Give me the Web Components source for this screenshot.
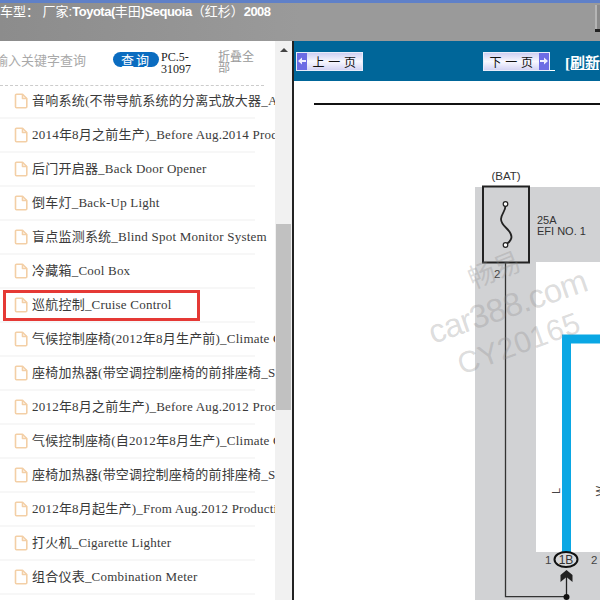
<!DOCTYPE html>
<html lang="zh"><head><meta charset="utf-8"><style>
html,body{margin:0;height:100%;overflow:hidden;background:#fff}
</style></head><body>
<app-shell>
<doc-side slot="side">
<doc-row>音响系统(不带导航系统的分离式放大器_Audio</doc-row>
<doc-row>2014年8月之前生产)_Before Aug.2014 Production</doc-row>
<doc-row>后门开启器_Back Door Opener</doc-row>
<doc-row>倒车灯_Back-Up Light</doc-row>
<doc-row>盲点监测系统_Blind Spot Monitor System</doc-row>
<doc-row>冷藏箱_Cool Box</doc-row>
<doc-row marked>巡航控制_Cruise Control</doc-row>
<doc-row>气候控制座椅(2012年8月生产前)_Climate Control</doc-row>
<doc-row>座椅加热器(带空调控制座椅的前排座椅_Seat</doc-row>
<doc-row>2012年8月之前生产)_Before Aug.2012 Production</doc-row>
<doc-row>气候控制座椅(自2012年8月生产)_Climate Control</doc-row>
<doc-row>座椅加热器(带空调控制座椅的前排座椅_Seat</doc-row>
<doc-row>2012年8月起生产)_From Aug.2012 Production</doc-row>
<doc-row>打火机_Cigarette Lighter</doc-row>
<doc-row>组合仪表_Combination Meter</doc-row>
</doc-side>
<doc-view slot="main"></doc-view>
</app-shell>
<script>
function shadow(el,html){el.attachShadow({mode:'open'}).innerHTML=html;}
const CJK='"Noto Sans CJK SC"';
customElements.define('app-shell',class extends HTMLElement{constructor(){super();shadow(this,`<style>
:host{display:flex;flex-direction:column;width:600px;height:600px;overflow:hidden}
header{height:38px;flex:none;border-top:3px solid #5f80c8;background:linear-gradient(90deg,#8c8c8c,#9a9a9a 50%);color:#fff;font:13px/17px "Liberation Sans",${CJK},sans-serif;white-space:nowrap;display:flex;justify-content:space-between}
b{font-weight:bold;letter-spacing:-.5px}
.tick{width:5px;height:27px;margin-top:2px;display:block;background:linear-gradient(90deg,#b5b5b5 0 2px,#8a8a8a 2px);border-bottom:3px solid #222;box-sizing:border-box}
.body{flex:1;min-height:0;display:flex}
.side{width:292px;flex:none;overflow:hidden}
.rule{width:2px;flex:none;background:#222}
.main{flex:1;min-width:0}
</style>
<header><span>车型： 厂家:<b>Toyota(</b>丰田<b>)Sequoia</b>（红杉）<b>2008</b></span><i class="tick"></i></header>
<div class="body"><div class="side"><slot name="side"></slot></div><div class="rule"></div><div class="main"><slot name="main"></slot></div></div>`);}});

customElements.define('doc-side',class extends HTMLElement{constructor(){super();shadow(this,`<style>
:host{display:flex;height:100%;background:#fff}
.col{width:275px;flex:none;overflow:hidden}
.search{height:45px;margin-bottom:-1px;width:264px;box-sizing:border-box;border-bottom:1px dashed #ccc;display:grid;grid-template-columns:113px 46px 59px 36px;align-items:start;font-family:"Liberation Serif",${CJK},serif}
.ph{font-size:13px;line-height:40px;color:#a9a9a9;white-space:nowrap;margin-left:-5px}
.btn{margin:11px 0 0;height:15px;border-radius:8px;background:#0a6cc0;color:#fff;font:13px/15px ${CJK},sans-serif;text-align:center;letter-spacing:2px}
.pc{margin:10px 0 0 2px;font-size:12px;line-height:12px;color:#222}
.fold{margin:11px 0 0;font-size:12px;line-height:11px;color:#999}
.bar{width:17px;flex:none;background:#f1f1f1;display:flex;flex-direction:column;align-items:center}
.up{height:18px;display:flex;justify-content:center;align-items:center}
.up i{border:4px solid transparent;border-bottom:4px solid #444;border-top:0;display:block}
.gap{height:165px}
.thumb{height:186px;width:15px;background:#c1c1c1}
</style>
<div class="col"><div class="search"><div class="ph">输入关键字查询</div><div class="btn">查询</div><div class="pc">PC.5-31097</div><div class="fold">折叠全部</div></div><slot></slot></div>
<div class="bar"><div class="up"><i></i></div><div class="gap"></div><div class="thumb"></div></div>`);}});

customElements.define('doc-row',class extends HTMLElement{constructor(){super();shadow(this,`<style>
:host{display:block;height:34px;width:255px;box-sizing:border-box;position:relative;border-bottom:2px solid #f7f7f7;padding-left:14px;font:13px/30px "Liberation Serif",${CJK},serif;color:#3a3a3a;white-space:nowrap;letter-spacing:.22px}
.in{display:flex;align-items:center;gap:4px;height:31px;width:261px;overflow:hidden}
svg{flex:none;display:block}
.mark{position:absolute;left:3px;top:1px;width:197px;height:31px;border:3px solid #e53935;box-sizing:border-box}
</style><div class="in"><svg width="14" height="16" viewBox="0 0 14 16" fill="none" stroke="#f3cfa6" stroke-width="1.6" stroke-linejoin="round"><path d="M1.500 2.200a1 1 0 0 1 1-1H8.500L12.800 5.500V13.800a1 1 0 0 1-1 1H2.500a1 1 0 0 1-1-1Z"/><path d="M8.500 1.200V5.500H12.800"/></svg><span><slot></slot></span></div>${this.hasAttribute('marked')?'<div class="mark"></div>':''}`);}});

customElements.define('nav-btn',class extends HTMLElement{constructor(){super();const next=this.hasAttribute('next');shadow(this,`<style>
:host{display:flex;flex:none;width:67px;height:19px;box-sizing:border-box;border:1px solid #e8ecfa;background:linear-gradient(#cfd0f2,#f8f8ff 50%,#d4d4f4);flex-direction:${next?'row-reverse':'row'};align-items:center;font:12px/17px "Noto Sans CJK SC",sans-serif;color:#111}
.a{width:10px;height:100%;background:#6c6ce4;display:flex;align-items:center;justify-content:center;flex:none}
span{flex:1;text-align:center;white-space:pre;letter-spacing:.5px}
</style><div class="a"><svg width="8" height="8" viewBox="0 0 8 8" fill="#eef"><path d="${next?'M0 3H4V0.500L8 4 4 7.500V5H0Z':'M8 3H4V0.500L0 4 4 7.500V5H8Z'}"/></svg></div><span><slot></slot></span>`);}});

customElements.define('doc-view',class extends HTMLElement{constructor(){super();shadow(this,`<style>
:host{display:flex;flex-direction:column;height:100%;background:#fff;overflow:hidden}
.nav{height:40px;flex:none;background:#006699;display:flex;align-items:center;box-sizing:border-box;padding:0 0 0 2px;white-space:nowrap;overflow:hidden}
.sp{width:120px;flex:none}
.u{margin:0 10px 0 0;width:5px;height:18px;flex:none;border-bottom:1px solid #fff}
.ref{color:#fff;font:bold 15px "Liberation Serif","Noto Sans CJK SC",serif;text-decoration:underline;flex:none}
svg{display:block;flex:1;min-height:0}
text{font-family:"Liberation Sans",sans-serif}
</style>
<div class="nav"><nav-btn>上 一 页</nav-btn><div class="sp"></div><nav-btn next>下 一 页</nav-btn><div class="u"></div><span class="ref">[刷新]</span></div>
<svg viewBox="294 81 306 519" width="306" height="519">
<rect x="314" y="103" width="286" height="2" fill="#111"/>
<rect x="475" y="187" width="125" height="413" fill="#d1d2d4"/>
<rect x="536" y="262" width="64" height="290" fill="#fff"/>
<path d="M505.500 262V596.700H566" fill="none" stroke="#333" stroke-width="1.300"/>
<rect x="483" y="186.500" width="46" height="76" fill="#d1d2d4" stroke="#222" stroke-width="2"/>
<path d="M505.500 205C506 211 501 214 501 219C501 227 511.500 229 511.500 237C511.500 241 508 243 505.500 245" fill="none" stroke="#222" stroke-width="1.800"/>
<circle cx="505.500" cy="204" r="2.300" fill="#fff" stroke="#222" stroke-width="1.200"/>
<circle cx="505.500" cy="245" r="2.300" fill="#fff" stroke="#222" stroke-width="1.200"/>
<text x="506" y="180" font-size="11.500" text-anchor="middle" fill="#333">(BAT)</text>
<text x="537" y="224" font-size="11" fill="#333">25A</text>
<text x="537" y="235" font-size="11" fill="#333">EFI NO. 1</text>
<text x="494" y="278" font-size="11.500" fill="#444">2</text>
<path d="M566.500 552V339H600" fill="none" stroke="#0aa7e4" stroke-width="9"/>
<text transform="translate(560 491) rotate(-90)" font-size="11" fill="#444" text-anchor="middle">L</text>
<text transform="translate(604 491) rotate(-90)" font-size="11" fill="#444" text-anchor="middle">W</text>
<ellipse cx="566" cy="559.500" rx="11.500" ry="7.500" fill="#d8d9db" stroke="#111" stroke-width="2"/>
<text x="566" y="564" font-size="12" text-anchor="middle" fill="#333">1B</text>
<text x="545" y="564" font-size="11.500" fill="#444">1</text>
<text x="591" y="564" font-size="11.500" fill="#444">2</text>
<path d="M566.500 570L572.500 575V582L566.500 577L560.500 582V575Z" fill="#222"/>
<path d="M566.500 577V597" stroke="#222" stroke-width="1.300"/>
<circle cx="566.500" cy="597" r="3" fill="#111"/>
<g fill="#8a8a8a" fill-opacity=".3">
<text transform="translate(473 289) rotate(-22)" font-size="27" style="font-family:'Noto Sans CJK SC',sans-serif">畅易</text>
<text transform="translate(433 344) rotate(-19)" font-size="33" textLength="166">car388.com</text>
<text transform="translate(462 375) rotate(-20)" font-size="30" textLength="128">CY20165</text>
</g>
</svg>`);}});
</script>
</body></html>
